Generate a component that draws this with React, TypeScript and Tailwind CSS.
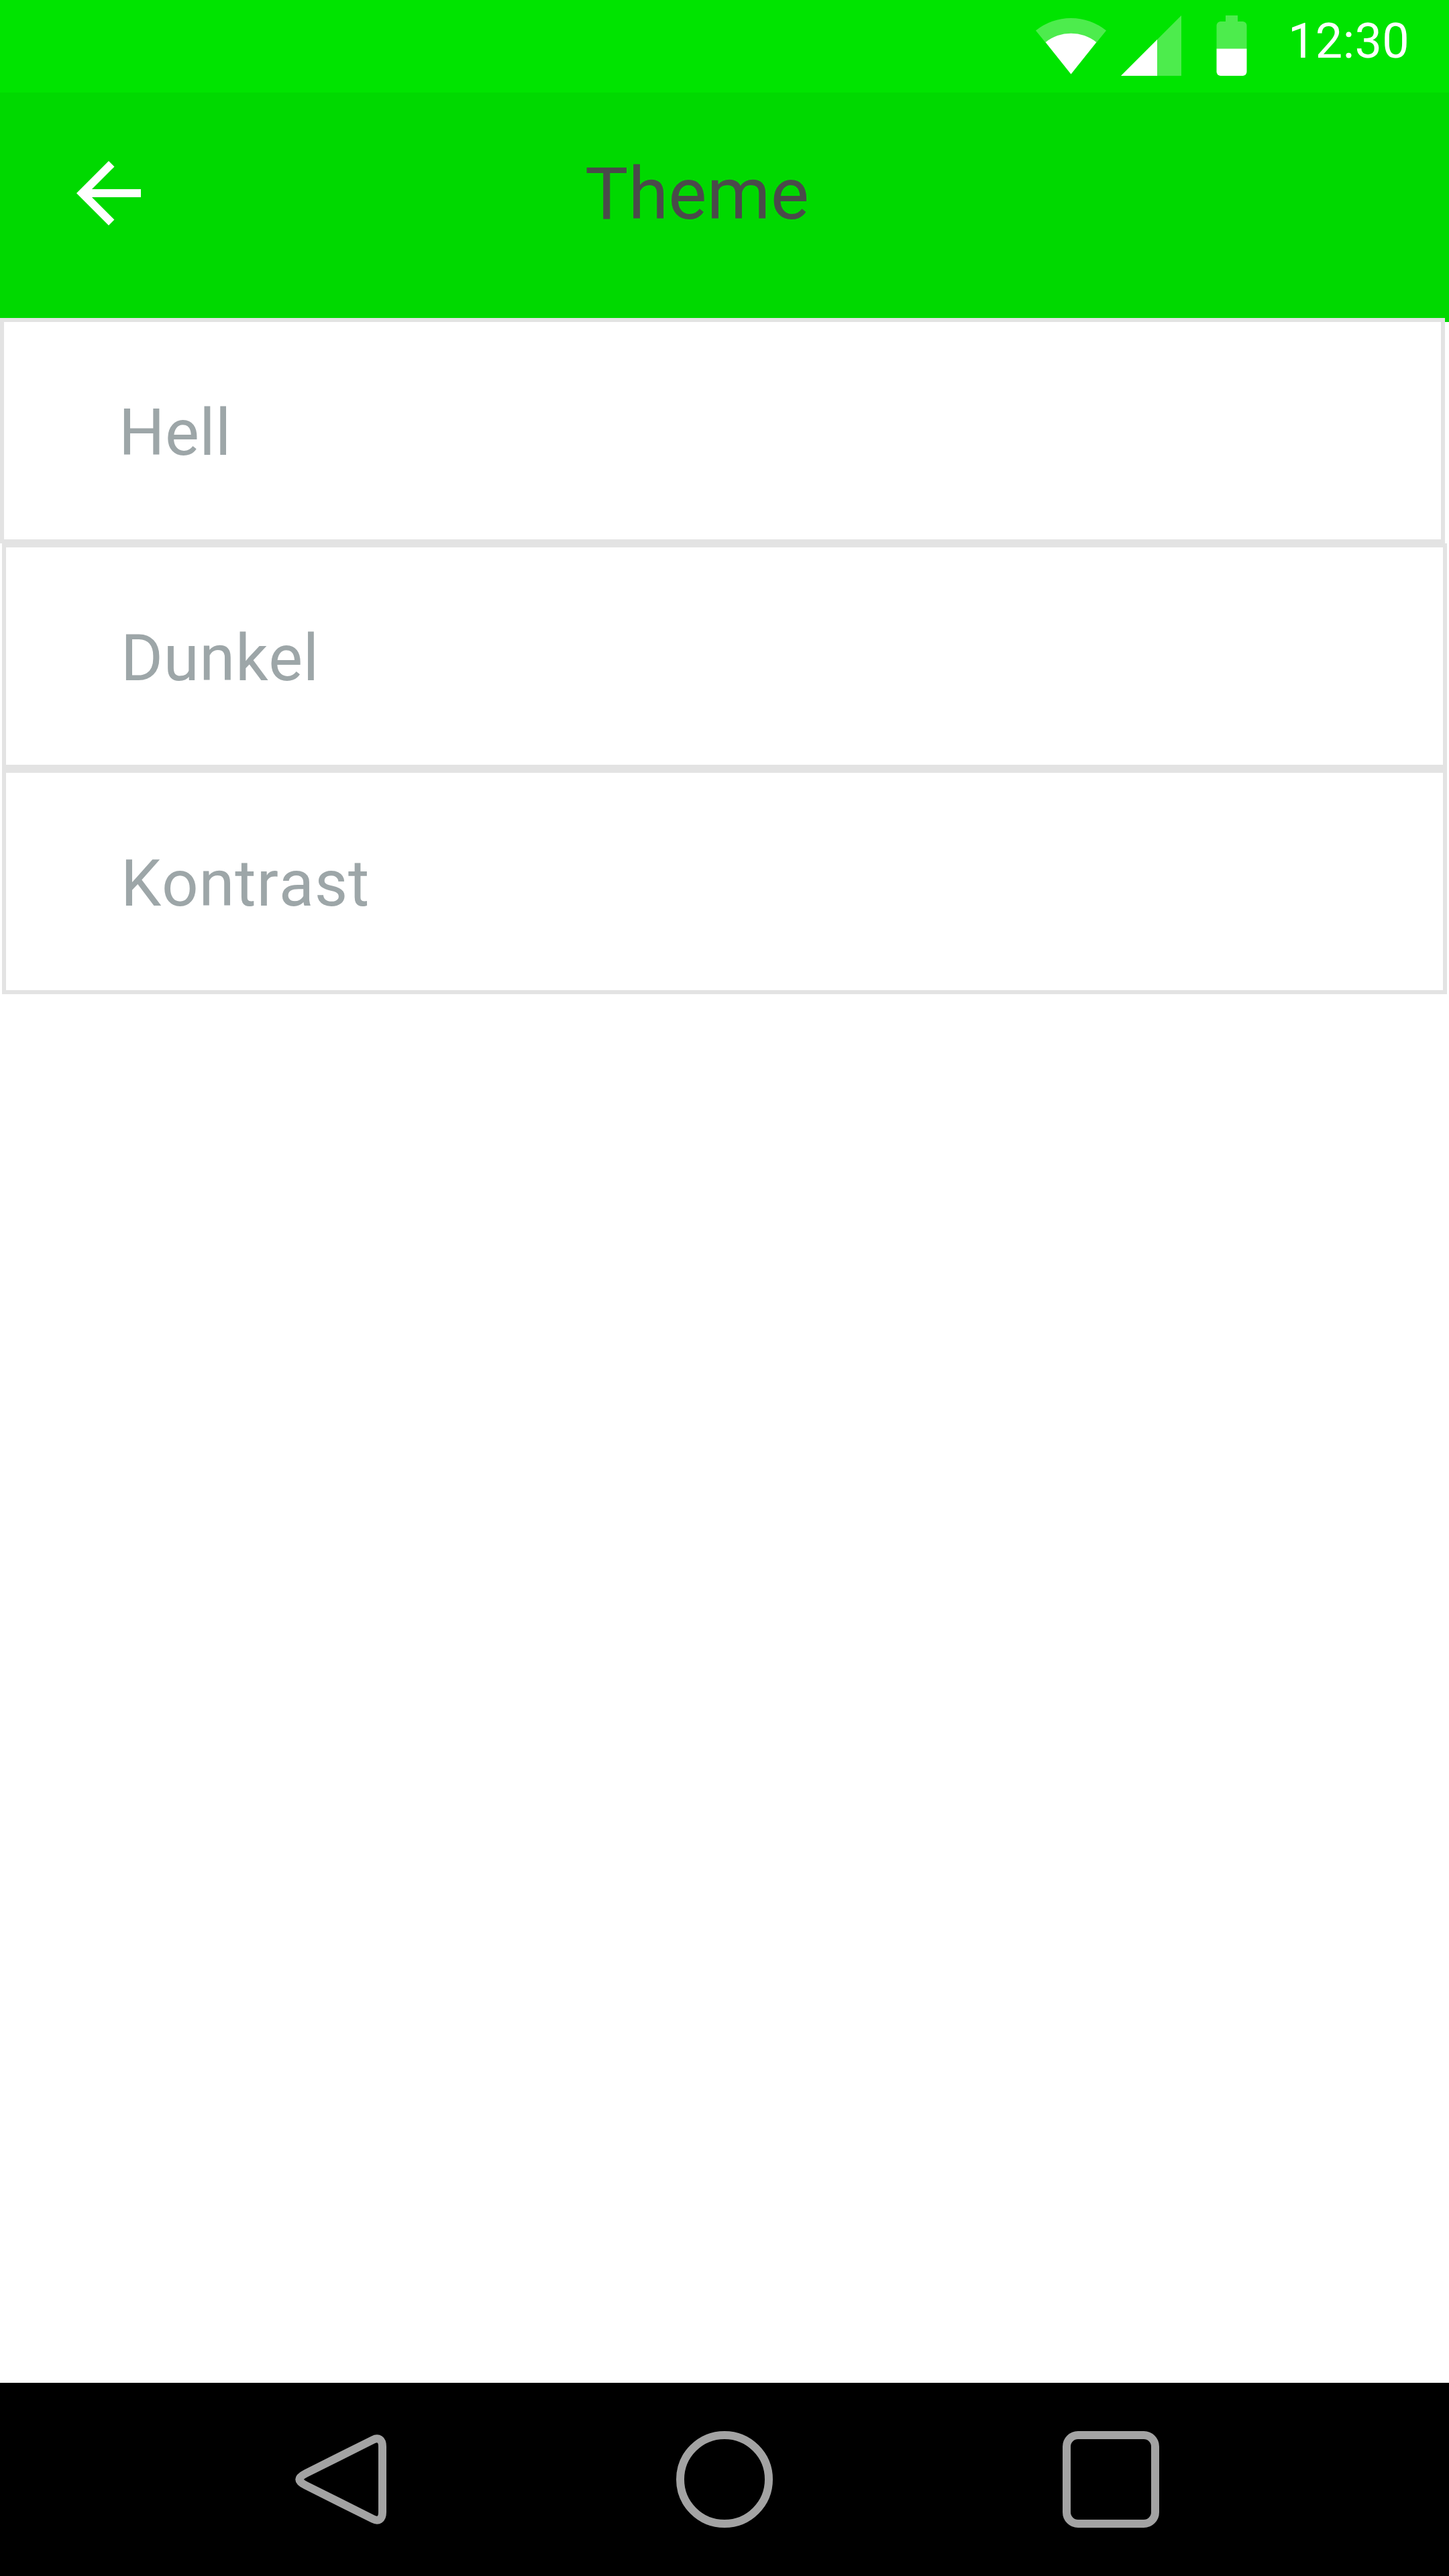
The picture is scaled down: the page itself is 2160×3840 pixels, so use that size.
const themes = [
  { name: "Hell", style: "ml-0 tracking-[0.4px]" },
  { name: "Dunkel", style: "ml-[3px] tracking-[0.65px]" },
  { name: "Kontrast", style: "ml-[3px] tracking-[0.75px]" },
];

function StatusBar() {
  return (
    <div className="flex h-[138px] justify-end bg-[#00e400] pr-[58px]">
      <svg className="mt-[23px] h-[90px] w-[105px]" viewBox="0 0 105 90">
        <path d="M52.5 87.5 L0 22.5 A83.5 83.5 0 0 1 105 22.5 Z" fill="#fff" fillOpacity="0.3" />
        <path d="M52.5 87.5 L14.7 39.9 A60.6 60.6 0 0 1 90.3 39.9 Z" fill="#fff" />
      </svg>
      <svg className="mt-[23px] ml-[22px] h-[90px] w-[90px]" viewBox="0 0 90 90">
        <path d="M0 90 L90 0 V90 Z" fill="#fff" fillOpacity="0.3" />
        <path d="M0 90 L54 36 V90 Z" fill="#fff" />
      </svg>
      <svg className="mt-[23px] ml-[52px] h-[90px] w-[46px]" viewBox="0 0 46 90">
        <path d="M14 0 H32 V9 H39.5 A6 6 0 0 1 45.5 15 V49.5 H0.5 V15 A6 6 0 0 1 6.5 9 H14 Z" fill="#fff" fillOpacity="0.3" />
        <path d="M0.5 49.5 H45.5 V84 A6 6 0 0 1 39.5 90 H6.5 A6 6 0 0 1 0.5 84 Z" fill="#fff" />
      </svg>
      <span className="mt-[19px] ml-[61px] w-[182px] text-[72px] leading-[85px] tracking-[0.35px] whitespace-nowrap text-white">
        12:30
      </span>
    </div>
  );
}

function Header() {
  return (
    <header className="flex h-[342px] bg-[#00d900] pl-[90px]">
      <button className="mt-[78px] h-[144px] w-[144px]" aria-label="Zurück">
        <svg className="h-full w-full" viewBox="0 0 24 24" fill="#fff">
          <path d="M20 11H7.83l5.59-5.59L12 4l-8 8 8 8 1.41-1.41L7.83 13H20v-2z" />
        </svg>
      </button>
      <h1 className="mt-[87px] ml-[638px] text-[108px] leading-[128px] tracking-[0.2px] text-[#4a4a4a]">Theme</h1>
    </header>
  );
}

function NavigationBar() {
  return (
    <nav className="flex h-[288px] items-center justify-between bg-black px-[432px]">
      <svg className="h-[144px] w-[144px]" viewBox="0 0 144 144" fill="none" stroke="#a3a3a3" strokeWidth="12">
        <path d="M138 23 C138 12.5 132 9 124 13 L24 63 C11 69.5 11 74.5 24 81 L124 131 C132 135 138 131.5 138 121 Z" />
      </svg>
      <div className="h-[144px] w-[144px] rounded-full border-[12px] border-[#a3a3a3]" />
      <div className="h-[144px] w-[144px] rounded-[23px] border-[12px] border-[#a3a3a3]" />
    </nav>
  );
}

export default function App() {
  return (
    <div className="flex h-[3840px] w-[2160px] flex-col overflow-hidden bg-white font-['Roboto',sans-serif]">
      <StatusBar />
      <Header />
      <main className="-mt-[6px] flex flex-1 flex-col">
        {themes.map(({ name, style }) => (
          <div
            key={name}
            className={`${style} h-[336px] w-[2154px] border-[6px] border-[#e3e3e3] bg-white pt-[108px] pl-[171px] text-[96px] leading-[114px] text-[#9da6a8] [font-kerning:none]`}
          >
            {name}
          </div>
        ))}
      </main>
      <NavigationBar />
    </div>
  );
}
